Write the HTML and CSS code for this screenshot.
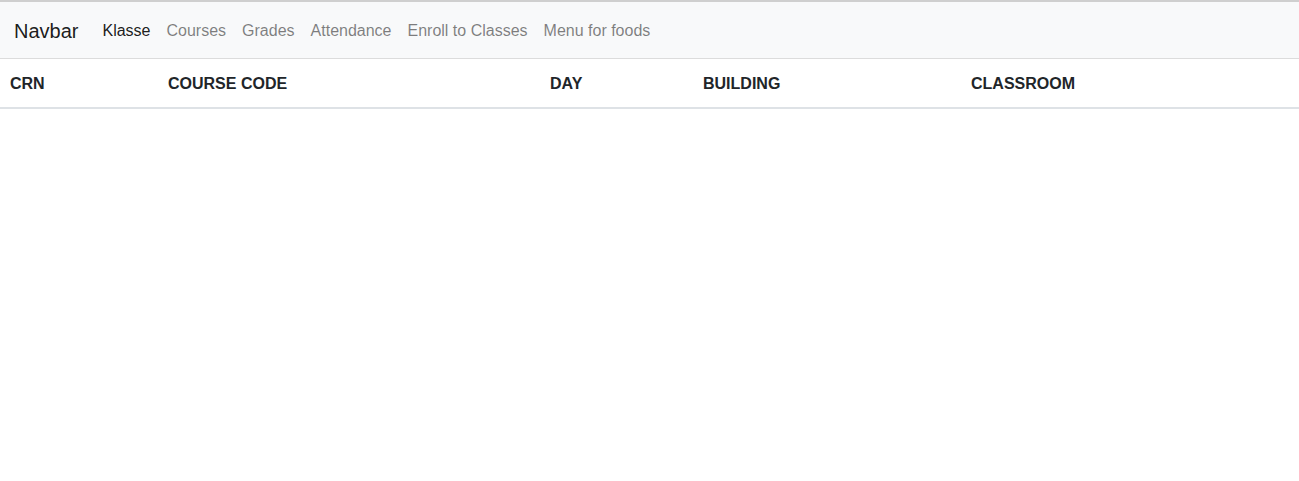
FILE: index.html
```html
<!DOCTYPE html>
<html lang="en">
<head>
<meta charset="utf-8">
<title>Navbar</title>
<link rel="stylesheet" href="styles.css">
</head>
<body>
<nav class="navbar">
  <a class="brand" href="#">Navbar</a>
  <ul class="nav">
    <li><a class="nav-link active" href="#">Klasse</a></li>
    <li><a class="nav-link" href="#">Courses</a></li>
    <li><a class="nav-link" href="#">Grades</a></li>
    <li><a class="nav-link" href="#">Attendance</a></li>
    <li><a class="nav-link" href="#">Enroll to Classes</a></li>
    <li><a class="nav-link" href="#">Menu for foods</a></li>
  </ul>
</nav>
<table class="table">
  <thead>
    <tr>
      <th class="c-crn">CRN</th>
      <th class="c-code">COURSE CODE</th>
      <th class="c-day">DAY</th>
      <th class="c-bld">BUILDING</th>
      <th class="c-room">CLASSROOM</th>
    </tr>
  </thead>
  <tbody></tbody>
</table>
</body>
</html>
```
FILE: styles.css
```css
html, body {
  margin: 0;
  padding: 0;
}
body {
  font-family: "Liberation Sans", Arial, sans-serif;
  font-size: 16px;
  line-height: 1.5;
  color: #212529;
  background: #fff;
  border-top: 2px solid #cfcfcf;
}
.navbar {
  display: flex;
  align-items: center;
  height: 57px;
  box-sizing: border-box;
  padding: 9px 14px 7px;
  background: #f8f9fa;
  border-bottom: 1px solid #dcdcdc;
}
.brand {
  font-size: 20px;
  line-height: 30px;
  padding: 5px 0;
  margin-right: 16px;
  color: rgba(0,0,0,.9);
  text-decoration: none;
}
.nav {
  display: flex;
  list-style: none;
  margin: 0;
  padding: 0;
}
.nav-link {
  display: block;
  padding: 8px;
  color: rgba(0,0,0,.5);
  text-decoration: none;
}
.nav-link.active {
  color: rgba(0,0,0,.9);
}
.table {
  width: 100%;
  border-collapse: collapse;
  table-layout: fixed;
}
.table th {
  box-sizing: border-box;
  text-align: left;
  font-weight: bold;
  padding: 13px 10px 11px;
  line-height: 24px;
  border-bottom: 2px solid #dee2e6;
}
.c-crn { width: 158px; }
.c-code { width: 382px; }
.c-day { width: 153px; }
.c-bld { width: 268px; }
```
